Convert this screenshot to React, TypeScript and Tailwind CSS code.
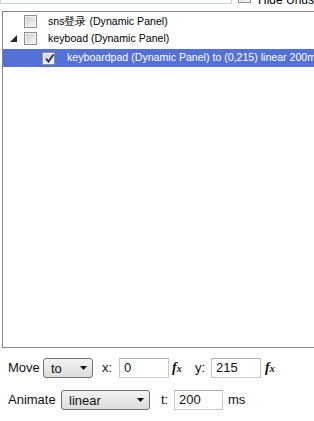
import React from 'react'

const font = { fontFamily: '"Liberation Sans", Arial, sans-serif' }

function Box({ checked = false }: { checked?: boolean }) {
  return (
    <span className="relative box-border flex h-[13px] w-[13px] shrink-0 items-center justify-center border border-[#8e8f8f] bg-[#f4f4f4]">
      <span className="h-[9px] w-[9px] bg-gradient-to-br from-[#cbcfd5] to-[#f6f6f6]" />
      {checked && (
        <svg className="absolute left-[1px] top-[0px]" width="11" height="11" viewBox="0 0 11 11">
          <path d="M2 5.5 L4.5 8.5 L9.5 1.5" fill="none" stroke="#1c2a5a" strokeWidth="1.8" />
        </svg>
      )}
    </span>
  )
}

function Select({ label, width }: { label: string; width: string }) {
  return (
    <div
      className={`${width} box-border flex h-[20px] shrink-0 items-center justify-between rounded-[3px] border border-[#707070] bg-gradient-to-b from-[#f3f3f3] to-[#dcdcdc] pr-[5px] pl-[7px] text-[13px] text-[#111]`}
    >
      <span className="leading-none">{label}</span>
      <svg width="7" height="4" viewBox="0 0 7 4">
        <polygon points="0,0 7,0 3.5,4" fill="#111" />
      </svg>
    </div>
  )
}

function Field({ value, width }: { value: string; width: string }) {
  return (
    <div
      className={`${width} box-border flex h-[20px] shrink-0 items-center border border-[#c6c9cf] border-t-[#abadb3] bg-white pl-[4px] text-[13px] text-[#111]`}
    >
      {value}
    </div>
  )
}

function Fx({ className = '' }: { className?: string }) {
  return (
    <span
      className={`${className} shrink-0 text-[14px] font-bold italic leading-none text-[#111]`}
      style={{ fontFamily: '"Liberation Serif", "Times New Roman", serif' }}
    >
      f<span className="text-[10px]">x</span>
    </span>
  )
}

export default function App() {
  return (
    <div className="h-[421px] w-[314px] overflow-hidden bg-white" style={font}>
      {/* search row, mostly scrolled off */}
      <div className="h-[5px] overflow-hidden">
        <div className="-mt-[16px] flex items-end whitespace-nowrap">
          <div className="box-border flex h-[20px] w-[232px] shrink-0 items-end border border-[#cfd3da] pb-[2px] pl-[7px] text-[12px] text-[#8a8a8a]">
            Search
          </div>
          <span className="mb-[1px] ml-[6px] shrink-0">
            <Box />
          </span>
          <span className="-mb-[2px] ml-[7px] shrink-0 text-[12px] leading-none text-black">Hide Unused</span>
        </div>
      </div>

      {/* tree */}
      <div className="mt-[6px] ml-[2px] box-border h-[337px] border-t border-b border-l border-[#878787] pt-[1px] text-[10.6px] text-black">
        <div className="flex h-[17px] items-center">
          <span className="ml-[21px]">
            <Box />
          </span>
          <span className="ml-[11px]">sns登录 (Dynamic Panel)</span>
        </div>
        <div className="flex h-[17px] items-center">
          <svg className="ml-[7px]" width="7" height="7" viewBox="0 0 7 7">
            <polygon points="7,0 7,7 0,7" fill="#262626" />
          </svg>
          <span className="ml-[7px]">
            <Box />
          </span>
          <span className="ml-[11px]">keyboad (Dynamic Panel)</span>
        </div>
        <div className="mt-[2px] flex h-[18px] items-center bg-[#5371d7] whitespace-nowrap text-white">
          <span className="ml-[39px]">
            <Box checked />
          </span>
          <span className="ml-[12px]">keyboardpad (Dynamic Panel) to (0,215) linear 200ms</span>
        </div>
      </div>

      {/* move */}
      <div className="mt-[10px] flex h-[20px] items-center pl-[8px] text-[13px] text-[#111]">
        <span className="w-[35px] shrink-0">Move</span>
        <Select label="to" width="w-[50px]" />
        <span className="ml-[9px] w-[17px] shrink-0">x:</span>
        <Field value="0" width="w-[50px]" />
        <Fx className="ml-[3px] w-[23px]" />
        <span className="w-[16px] shrink-0">y:</span>
        <Field value="215" width="w-[50px]" />
        <Fx className="ml-[4px]" />
      </div>

      {/* animate */}
      <div className="mt-[12px] flex h-[20px] items-center pl-[8px] text-[13px] text-[#111]">
        <span className="w-[53px] shrink-0">Animate</span>
        <Select label="linear" width="w-[89px]" />
        <span className="ml-[11px] w-[13px] shrink-0">t:</span>
        <Field value="200" width="w-[49px]" />
        <span className="ml-[5px]">ms</span>
      </div>
    </div>
  )
}
